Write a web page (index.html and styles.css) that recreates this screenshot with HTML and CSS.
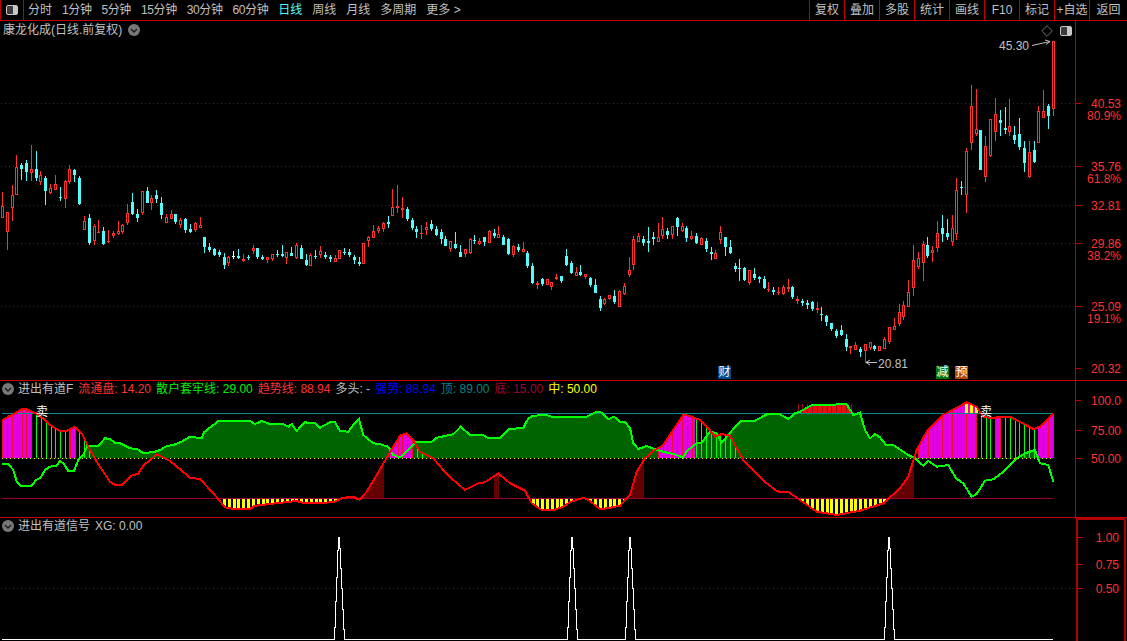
FILE: index.html
```html
<!DOCTYPE html>
<html lang="zh-CN">
<head>
    <meta charset="UTF-8">
    <meta name="viewport" content="width=device-width, initial-scale=1.0">
    <title>康龙化成 日线</title>
    <link rel="stylesheet" href="styles.css">
</head>
<body>
    <div class="toolbar">
        <div class="period-group">
            <div class="panel-btn">
                <svg class="toggle-icon" viewBox="0 0 12 10"><rect x="0.5" y="0.5" width="11" height="9" rx="1.5" class="toggle-frame"/><rect x="7" y="1" width="4" height="8" class="toggle-fill"/></svg>
            </div>
            <span class="period">分时</span>
            <span class="period tight">1分钟</span>
            <span class="period tight">5分钟</span>
            <span class="period tight">15分钟</span>
            <span class="period tight">30分钟</span>
            <span class="period tight">60分钟</span>
            <span class="period active">日线</span>
            <span class="period">周线</span>
            <span class="period">月线</span>
            <span class="period">多周期</span>
            <span class="period">更多 &gt;</span>
        </div>
        <div class="action-group">
            <span class="action">复权</span>
            <span class="action">叠加</span>
            <span class="action">多股</span>
            <span class="action">统计</span>
            <span class="action">画线</span>
            <span class="action">F10</span>
            <span class="action">标记</span>
            <span class="action">+自选</span>
            <span class="action">返回</span>
        </div>
    </div>

    <div class="pane pane-main">
        <div class="chart">
            <svg class="plot" id="mainPlot" viewBox="0 21 1075 359" width="1075" height="359"></svg>
            <div class="pane-title title-main">
                <span>康龙化成(日线.前复权)</span>
                <svg class="fold-icon" viewBox="0 0 12 12"><circle cx="6" cy="6" r="6"/><path d="M3 5l3 3 3-3"/></svg>
            </div>
            <div class="chart-tools">
                <svg class="diamond-icon" viewBox="0 0 12 12"><path d="M6 .7L11.3 6 6 11.3.7 6z"/></svg>
                <svg class="toggle-icon" viewBox="0 0 12 10"><rect x="0.5" y="0.5" width="11" height="9" rx="1.5" class="toggle-frame"/><rect x="7" y="1" width="4" height="8" class="toggle-fill"/></svg>
            </div>
            <span class="note note-high">45.30</span>
            <span class="note note-low">20.81</span>
            <span class="badge badge-cai">财</span>
            <span class="badge badge-jian">减</span>
            <span class="badge badge-yu">预</span>
        </div>
        <div class="axis" id="mainAxis"></div>
    </div>

    <div class="pane pane-trend">
        <div class="chart">
            <svg class="plot" id="trendPlot" viewBox="0 381 1075 136" width="1075" height="136"></svg>
            <div class="pane-title title-trend">
                <svg class="fold-icon" viewBox="0 0 12 12"><circle cx="6" cy="6" r="6"/><path d="M3 5l3 3 3-3"/></svg>
                <span>进出有道F</span>
                <span class="red">流通盘: 14.20</span>
                <span class="green">散户套牢线: 29.00</span>
                <span class="red">趋势线: 88.94</span>
                <span>多头: -</span>
                <span class="blue">强势: 88.94</span>
                <span class="teal">顶: 89.00</span>
                <span class="crimson">底: 15.00</span>
                <span class="yellow">中: 50.00</span>
            </div>
            <span class="sell sell-a">卖</span>
            <span class="sell sell-b">卖</span>
        </div>
        <div class="axis" id="trendAxis"></div>
    </div>

    <div class="pane pane-signal">
        <div class="chart">
            <svg class="plot" id="signalPlot" viewBox="0 518 1076 123" width="1076" height="123"></svg>
            <div class="pane-title title-signal">
                <svg class="fold-icon" viewBox="0 0 12 12"><circle cx="6" cy="6" r="6"/><path d="M3 5l3 3 3-3"/></svg>
                <span>进出有道信号</span>
                <span>XG: 0.00</span>
            </div>
        </div>
        <div class="axis axis-box" id="signalAxis"></div>
    </div>

    <script src="chart.js"></script>
</body>
</html>
```

FILE: styles.css
```css
* {
    margin: 0;
    padding: 0;
    box-sizing: border-box;
}

html, body {
    height: 100%;
    overflow: hidden;
}

body {
    background: #000;
    color: #c0c0c0;
    font-family: "Liberation Sans", "Noto Sans CJK SC", sans-serif;
    font-size: 12px;
    line-height: 14px;
}

.toolbar {
    display: flex;
    justify-content: space-between;
    height: 21px;
    border-bottom: 1px solid #c00000;
}

.period-group {
    display: flex;
    align-items: center;
    gap: 10px;
}

.panel-btn {
    display: flex;
    align-items: center;
    justify-content: center;
    width: 24px;
    height: 20px;
    margin-right: -6px;
    border-left: 1px solid #c00000;
    border-right: 1px solid #c00000;
}

.period.tight {
    letter-spacing: -0.4px;
}

.period.active {
    color: #54fcfc;
}

.action-group {
    display: flex;
}

.action {
    display: flex;
    align-items: center;
    justify-content: center;
    width: 35px;
    height: 20px;
    border-left: 1px solid #c00000;
}

.action:last-child {
    width: 38px;
}

.toggle-icon {
    width: 12px;
    height: 10px;
}

.toggle-frame {
    fill: #3c3c3c;
    stroke: #c8c8c8;
}

.toggle-fill {
    fill: #c8c8c8;
}

.pane {
    display: flex;
    border-bottom: 1px solid #c00000;
}

.pane-main {
    height: 360px;
}

.pane-trend {
    height: 137px;
}

.pane-signal {
    height: 123px;
    border-bottom: none;
}

.chart {
    position: relative;
    flex: 1;
}

.plot {
    position: absolute;
    top: 0;
    left: 0;
    display: block;
}

.pane-title {
    position: relative;
    display: flex;
    align-items: center;
    gap: 5px;
    padding-left: 2px;
}

.title-main {
    height: 18px;
    gap: 6px;
    padding-left: 3px;
}

.title-trend {
    height: 15px;
}

.title-signal {
    height: 16px;
}

.fold-icon {
    flex: none;
    width: 12px;
    height: 12px;
}

.title-trend .fold-icon,
.title-signal .fold-icon {
    margin-right: -1px;
}

.fold-icon circle {
    fill: #787878;
}

.fold-icon path {
    fill: none;
    stroke: #1c1c1c;
    stroke-width: 1.4;
}

.red {
    color: #ff3232;
}

.green {
    color: #00f000;
}

.blue {
    color: #0000ff;
}

.teal {
    color: #008484;
}

.crimson {
    color: #a00038;
}

.yellow {
    color: #ffff00;
}

.chart-tools {
    position: absolute;
    top: 4px;
    right: 3px;
    display: flex;
    align-items: center;
    gap: 7px;
}

.diamond-icon {
    width: 12px;
    height: 12px;
}

.diamond-icon path {
    fill: none;
    stroke: #707070;
}

.note {
    position: absolute;
}

.note-high {
    top: 18px;
    left: 999px;
}

.note-low {
    top: 336px;
    left: 878px;
}

.badge {
    position: absolute;
    top: 345px;
    width: 13px;
    height: 13px;
    color: #fff;
    text-align: center;
    line-height: 13px;
}

.badge-cai {
    left: 718px;
    background: #004a8c;
}

.badge-jian {
    left: 936px;
    background: #007a10;
}

.badge-yu {
    left: 955px;
    background: #b04a10;
}

.sell {
    position: absolute;
    top: 24px;
    color: #fff;
}

.sell-a {
    left: 36px;
}

.sell-b {
    left: 980px;
}

.axis {
    position: relative;
    flex: none;
    width: 52px;
    border-left: 1px solid #c00000;
}

.axis-box {
    width: 50px;
    margin-right: 1px;
    border: 2px solid #b00000;
    border-bottom: none;
}

.tick {
    position: absolute;
    left: 0;
    width: 5px;
    height: 1px;
    background: #c00000;
}

.axis-label {
    position: absolute;
    right: 6px;
    color: #ff3232;
    line-height: 11px;
}

.axis-box .axis-label {
    right: 5px;
}
```

FILE: chart.js
```javascript
const NS = 'http://www.w3.org/2000/svg';

function add(parent, tag, attrs) {
    const el = document.createElementNS(NS, tag);
    for (const k in attrs) el.setAttribute(k, attrs[k]);
    parent.appendChild(el);
    return el;
}

// candles read off the chart: [x, type, high, bodyTop, bodyBottom, low]
// each block is in its own 3x crop space, ox/oy is the crop origin
const candleBlocks = [
    { ox: 0, oy: 130, rows: [
        [7,'r',187,229,263,263],[22,'r',245,247,305,360],[37,'r',166,196,233,273],[49,'r',75,112,194,194],
        [64,'c',100,105,117,150],[79,'c',90,99,125,153],[94,'r',45,118,128,153],[109,'c',63,117,143,153],
        [121,'r',124,136,156,165],[136,'c',138,144,183,225],[151,'r',163,175,189,192],[166,'r',135,163,179,179],
        [181,'c',170,201,203,213],[196,'r',149,153,206,234],[208,'r',106,118,156,162],[223,'c',117,120,135,157],
        [238,'c',138,144,222,225],[253,'r',258,273,299,299],[268,'c',252,264,339,345],[283,'r',282,288,332,345],
        [295,'r',270,305,307,309],[310,'c',291,303,342,345],[325,'r',300,333,335,339],[340,'r',303,309,318,324],
        [355,'r',273,304,312,316],[367,'r',282,285,306,312],[382,'r',222,249,279,285],[397,'c',189,216,252,255],
        [412,'c',237,252,264,276],[427,'r',183,183,249,255],[442,'c',171,183,219,219],[454,'r',195,204,219,240],
        [469,'c',180,195,207,219],[484,'c',201,219,255,267],[499,'r',252,262,278,278],[514,'r',240,252,267,267],
        [526,'c',252,252,276,282],[541,'r',264,270,285,294],[556,'c',264,267,300,309],[571,'c',282,297,306,309],
        [586,'r',276,279,300,306],[601,'r',261,285,294,294],[613,'c',321,321,351,369],[628,'c',339,351,360,366],
        [643,'c',354,357,375,378],[658,'c',360,366,375,381],[673,'c',369,381,405,417],[685,'r',378,381,399,408],
        [700,'w',363,378,381,387],[715,'c',357,378,384,387],[730,'r',372,387,393,396],[745,'c',375,381,384,390],
        [760,'r',345,354,363,372],[772,'c',354,354,381,387],[787,'c',375,381,387,390],[802,'r',381,381,390,399],
        [817,'r',372,372,387,393],[832,'c',360,372,375,381]
    ]},
    { ox: 280, oy: 170, rows: [
        [7,'c',225,252,258,261],[19,'r',246,246,264,282],[34,'c',231,249,258,258],[49,'r',219,225,264,267],
        [64,'c',225,234,267,267],[79,'c',252,270,285,288],[91,'r',249,255,288,288],[106,'c',240,258,261,267],
        [121,'r',228,243,255,264],[136,'c',246,255,261,267],[151,'c',255,261,267,276],[166,'r',255,264,276,276],
        [178,'r',240,240,267,267],[193,'c',234,246,249,255],[208,'c',237,246,255,261],[223,'c',255,261,270,282],
        [238,'c',261,276,282,288],[250,'r',219,219,282,282],[265,'r',198,201,213,231],[280,'r',165,183,204,204],
        [295,'r',168,174,183,189],[310,'r',156,159,177,186],[325,'c',138,156,162,174],[337,'r',57,111,138,138],
        [352,'r',45,108,114,129],[367,'r',81,114,120,144],[382,'c',111,117,147,153],[397,'c',144,150,174,180],
        [409,'c',168,177,186,204],[424,'r',165,189,192,207],[439,'r',156,171,180,195],[454,'c',150,162,177,183],
        [469,'c',168,177,195,198],[484,'c',177,186,207,222],[496,'c',198,207,228,228],[511,'r',213,213,237,246],
        [526,'c',186,222,234,237],[541,'c',225,246,261,261],[556,'r',237,237,252,261],[571,'r',204,207,249,252],
        [583,'c',195,210,213,222],[598,'r',204,213,222,225],[613,'c',201,201,216,228],[628,'r',180,183,219,219],
        [643,'c',177,189,198,204],[655,'r',168,192,204,204],[670,'c',195,201,225,225],[685,'c',204,207,252,255],
        [700,'r',225,228,255,261],[715,'c',222,231,240,246],[730,'r',216,237,246,246],[742,'c',243,249,288,294],
        [757,'c',279,288,339,342],[772,'r',333,339,345,357],[787,'c',324,327,342,348],[802,'r',327,327,345,345],
        [814,'r',336,336,351,360],[829,'r',312,321,327,330]
    ]},
    { ox: 540, oy: 200, rows: [
        [64,'c',228,228,243,249],[79,'c',147,168,195,198],[94,'c',183,189,219,222],[109,'r',201,216,228,228],
        [121,'c',195,216,225,228],[136,'r',222,222,231,237],[151,'c',231,234,255,261],[166,'c',237,255,279,279],
        [181,'c',288,297,324,333],[193,'r',294,297,312,315],[208,'r',285,285,297,300],[223,'c',270,288,306,312],
        [238,'r',270,273,320,320],[253,'r',249,258,282,285],[268,'r',171,210,225,231],[280,'r',108,117,195,210],
        [295,'r',99,108,126,126],[310,'c',108,117,129,138],[325,'c',81,123,129,156],[340,'c',96,111,117,135],
        [355,'r',69,111,126,126],[367,'r',51,87,108,117],[382,'c',84,93,105,117],[397,'r',78,78,105,117],
        [412,'c',51,54,81,108],[427,'r',69,78,93,96],[439,'c',78,84,114,126],[454,'r',93,108,117,120],
        [469,'c',99,108,129,132],[484,'r',111,114,135,135],[499,'c',114,123,147,156],[514,'c',141,156,162,180],
        [526,'r',150,159,177,177],[541,'r',78,96,120,132],[556,'c',111,111,141,168],[571,'c',120,141,159,162],
        [586,'c',189,198,207,216],[598,'c',177,204,207,243],[613,'c',201,204,240,243],[628,'r',210,210,249,255],
        [643,'c',204,222,234,240],[658,'c',228,231,237,249],[673,'c',228,237,264,267],[685,'r',246,267,270,276],
        [700,'c',261,270,276,285],[715,'r',261,276,279,285],[730,'r',255,261,282,285],[745,'r',237,261,267,276],
        [757,'c',258,261,291,297],[772,'r',288,297,303,312],[787,'c',297,303,309,318],[802,'c',300,309,315,327],
        [817,'c',303,306,327,333],[832,'r',306,324,330,339]
    ]},
    { ox: 820, oy: 70, rows: [
        [4,'c',711,732,735,753],[19,'c',735,738,756,768],[34,'c',759,759,777,783],[49,'c',777,783,798,804],
        [64,'c',765,780,795,798],[79,'c',792,807,831,843],[91,'r',828,828,834,852],[106,'r',816,825,840,840],
        [121,'c',831,837,846,861],[136,'r',822,822,843,880],[151,'r',816,816,834,840],[163,'c',825,828,837,843],
        [178,'r',828,828,843,843],[193,'r',801,807,837,837],[208,'r',771,771,816,822],[223,'r',744,768,780,780],
        [238,'r',702,726,762,768],[250,'r',693,705,741,750],[265,'r',630,666,711,711],[280,'r',525,570,654,678],
        [295,'r',546,564,591,597],[310,'r',513,522,579,633],[322,'c',501,525,558,564],[337,'r',528,540,549,576],
        [352,'r',453,489,534,546],[367,'c',435,474,492,516],[382,'c',447,489,501,510],[397,'r',435,474,516,528],
        [409,'r',324,360,492,510],[424,'c',333,351,354,375],[439,'r',234,243,375,429],[454,'r',45,108,219,240],
        [469,'r',57,177,192,198],[481,'c',180,180,300,300],[496,'r',198,228,321,336],[511,'r',147,147,258,261],
        [526,'r',84,132,186,213],[541,'c',120,150,159,198],[556,'c',111,174,180,192],[568,'r',87,168,186,198],
        [583,'c',168,195,210,222],[598,'c',144,192,231,240],[613,'c',213,234,279,306],[628,'r',213,246,321,324],
        [643,'c',213,240,276,279],[655,'r',108,123,219,219],[670,'r',60,123,144,144],[685,'c',102,108,138,177],
        [700,'r',-87,-87,117,138]
    ]}
];

const candleColors = { r: '#ff3232', c: '#54fcfc', w: '#ffffff' };

function drawMain() {
    const svg = document.getElementById('mainPlot');
    [103, 166, 205, 243, 306].forEach(y => {
        add(svg, 'line', { x1: 1, x2: 1075, y1: y + 0.5, y2: y + 0.5, stroke: '#900000', 'stroke-dasharray': '1 3' });
    });

    const g = add(svg, 'g', { 'shape-rendering': 'crispEdges' });
    candleBlocks.forEach(block => {
        block.rows.forEach(row => {
            const x = Math.round(block.ox + row[0] / 3);
            const hi = Math.round(block.oy + row[2] / 3);
            const top = Math.round(block.oy + row[3] / 3);
            const bot = Math.round(block.oy + row[4] / 3);
            const lo = Math.round(block.oy + row[5] / 3);
            drawCandle(g, x, row[1], hi, top, bot, lo);
        });
    });

    // arrows next to the high and low prices
    add(svg, 'path', { d: 'M1032 45.5L1050 41.5M1045 40L1050 41.5L1046 44.5', fill: 'none', stroke: '#c0c0c0' });
    add(svg, 'path', { d: 'M877 362.5H866M870 360L866 362.5L870 365', fill: 'none', stroke: '#c0c0c0' });
}

function drawCandle(g, x, type, hi, top, bot, lo) {
    const color = candleColors[type];
    if (hi < top) add(g, 'rect', { x: x, y: hi, width: 1, height: top - hi, fill: color });
    if (lo > bot) add(g, 'rect', { x: x, y: bot, width: 1, height: lo - bot, fill: color });

    if (bot - top < 3 || type !== 'r') {
        add(g, 'rect', { x: x - 1, y: top, width: 3, height: Math.max(bot - top, 1), fill: color });
    } else {
        add(g, 'rect', { x: x - 0.5, y: top + 0.5, width: 2, height: bot - top - 1, fill: '#000', stroke: color });
    }
}

// indicator curves, same crop coordinates as above
function crop(ox, oy, pts) {
    return pts.map(p => [ox + p[0] / 3, oy + p[1] / 3]);
}

const greenCurve = [].concat(
    crop(0, 375, [[6,268],[25,268],[40,285],[50,320],[62,332],[95,332],[108,315],[122,308],[135,285],[150,275],[170,272],[180,258],[190,265],[205,288],[222,288],[235,255],[250,240],[262,213],[295,212],[315,190],[330,192],[345,203],[360,205],[390,220],[412,222],[430,235],[465,230],[480,225],[500,213],[520,210],[545,200],[570,185],[605,190],[612,172],[640,150],[655,138],[750,138],[765,147],[785,138],[810,147],[850,147],[865,155],[875,147],[890,168],[915,140],[925,145],[945,145],[960,158],[990,142],[1005,142],[1020,168],[1045,170],[1060,150],[1077,133],[1090,180],[1120,205],[1140,208],[1165,215],[1180,240]]),
    crop(400, 375, [[0,247],[15,235],[50,200],[95,200],[110,188],[160,178],[182,155],[210,180],[250,180],[265,190],[300,190],[325,163],[370,158],[385,130],[400,122],[440,120],[455,125],[560,125],[590,110],[605,113],[625,133],[642,125],[660,140],[675,140],[690,160],[700,205],[715,222],[740,213],[770,225],[790,230],[830,240],[850,248],[860,228],[890,205],[905,203],[930,170],[950,175],[965,203],[1010,150],[1025,137],[1065,137],[1100,118]]),
    crop(780, 360, [[0,163],[25,177],[45,160],[60,155],[95,135],[200,133],[220,165],[240,158],[255,210],[270,235],[285,222],[300,232],[318,255],[340,255],[385,285],[405,295],[430,317],[445,303],[470,320],[505,315],[528,355],[550,370],[575,410],[590,402],[615,362],[640,358],[670,335],[710,295],[735,280],[765,270],[780,310],[805,315],[820,365]])
);

const redCurve = [].concat(
    crop(0, 375, [[6,135],[25,125],[40,118],[65,103],[80,103],[108,115],[130,130],[150,150],[180,168],[200,168],[225,155],[245,175],[265,215],[290,260],[330,320],[345,330],[365,330],[395,302],[415,296],[430,272],[470,238],[510,258],[570,308],[600,312],[640,355],[675,397],[700,402],[750,402],[765,392],[890,378],[915,385],[1000,382],[1030,368],[1060,366],[1078,374],[1100,350],[1130,300],[1165,240]]),
    crop(400, 375, [[0,182],[20,175],[40,195],[60,230],[100,250],[135,292],[160,315],[195,345],[235,325],[255,322],[295,295],[330,325],[375,347],[395,385],[425,405],[460,405],[490,395],[510,382],[550,368],[565,375],[600,402],[620,400],[660,392],[690,360],[710,290],[735,250],[760,228],[790,210],[850,120],[870,123],[900,135],[925,160],[945,185],[965,177],[990,182],[1030,255],[1060,285],[1100,325],[1130,348]]),
    crop(780, 360, [[0,396],[25,396],[60,420],[110,455],[170,465],[240,452],[310,430],[360,385],[385,350],[410,270],[440,215],[490,165],[560,127],[590,140],[610,170],[640,175],[660,170],[690,170],[760,207],[780,200],[820,160]])
);

function curveY(curve, x) {
    if (x <= curve[0][0]) return curve[0][1];
    for (let i = 1; i < curve.length; i++) {
        if (x <= curve[i][0]) {
            const a = curve[i - 1], b = curve[i];
            return a[1] + (b[1] - a[1]) * (x - a[0]) / (b[0] - a[0]);
        }
    }
    return curve[curve.length - 1][1];
}

function ptsAttr(curve) {
    return curve.map(p => p[0].toFixed(1) + ',' + p[1].toFixed(1)).join(' ');
}

// area between a curve and a flat base, over x0..x1
function band(svg, curve, x0, x1, base, fill) {
    const pts = [];
    for (let x = x0; x <= x1; x++) pts.push([x, curveY(curve, x)]);
    pts.push([x1, base], [x0, base]);
    add(svg, 'polygon', { points: ptsAttr(pts), fill: fill });
}

const BAR_STEP = 4.82;

function barSlots(x0, x1) {
    const out = [];
    for (let i = 0; i < 220; i++) {
        const x = Math.round(2.3 + BAR_STEP * i);
        if (x >= x0 && x <= x1) out.push(x);
    }
    return out;
}

function drawTrend() {
    const svg = document.getElementById('trendPlot');
    const defs = add(svg, 'defs', {});
    add(add(defs, 'clipPath', { id: 'aboveMid' }), 'rect', { x: 0, y: 381, width: 1075, height: 77.5 });
    add(add(defs, 'clipPath', { id: 'aboveTop' }), 'rect', { x: 795, y: 381, width: 60, height: 32.5 });

    // green area over the mid line
    const closed = greenCurve.concat([[1053, 458], [2, 458]]);
    add(svg, 'polygon', { points: ptsAttr(closed), fill: '#006400', 'clip-path': 'url(#aboveMid)' });
    add(svg, 'polygon', { points: ptsAttr(closed), fill: '#e81010', 'clip-path': 'url(#aboveTop)' });
    barSlots(797, 852).forEach(x => {
        add(svg, 'line', { x1: x + 0.5, x2: x + 0.5, y1: 404, y2: 413, stroke: '#a01010', 'clip-path': 'url(#aboveTop)' });
    });

    // magenta blocks, one red stripe per bar
    [[2, 32], [69, 75], [390, 413], [658, 695], [918, 977], [995, 1001], [1038, 1053]].forEach(r => {
        band(svg, redCurve, r[0], r[1], 458, '#e400e4');
        barSlots(r[0], r[1]).forEach(x => {
            add(svg, 'line', { x1: x + 0.5, x2: x + 0.5, y1: curveY(redCurve, x), y2: 458, stroke: '#e8102c', 'shape-rendering': 'crispEdges' });
        });
    });

    // yellow caps on the magenta hump
    barSlots(962, 977).forEach(x => {
        add(svg, 'rect', { x: x - 1, y: curveY(redCurve, x), width: 3, height: Math.max(413 - curveY(redCurve, x), 0), fill: '#ffff00', 'shape-rendering': 'crispEdges' });
    });

    // thin green bars
    [[36, 65], [78, 90], [415, 425], [696, 742], [978, 992], [1004, 1035]].forEach(r => {
        barSlots(r[0], r[1]).forEach(x => {
            add(svg, 'line', { x1: x + 0.5, x2: x + 0.5, y1: curveY(redCurve, x), y2: 458, stroke: '#00ff00', 'shape-rendering': 'crispEdges' });
        });
    });

    // dark red wedges where the trend line climbs out of the bottom
    [[362, 384], [494, 499], [631, 644], [892, 914]].forEach(r => band(svg, redCurve, r[0], r[1], 498, '#640000'));

    // yellow stripes under the bottom line
    [[220, 340], [532, 627], [800, 890]].forEach(r => {
        barSlots(r[0], r[1]).forEach(x => {
            const y = curveY(redCurve, x);
            if (y > 498) add(svg, 'rect', { x: x - 1, y: 498, width: 3, height: y - 498, fill: '#ffff00', 'shape-rendering': 'crispEdges' });
        });
    });

    add(svg, 'line', { x1: 2, x2: 1053, y1: 413.5, y2: 413.5, stroke: '#008c8c' });
    add(svg, 'line', { x1: 2, x2: 1053, y1: 458.5, y2: 458.5, stroke: '#ffff00', 'stroke-dasharray': '1 3' });
    add(svg, 'line', { x1: 2, x2: 1053, y1: 498.5, y2: 498.5, stroke: '#a00030' });

    add(svg, 'polyline', { points: ptsAttr(greenCurve), fill: 'none', stroke: '#00ff00', 'stroke-width': 2, 'shape-rendering': 'crispEdges' });
    add(svg, 'polyline', { points: ptsAttr(redCurve), fill: 'none', stroke: '#ff0000', 'stroke-width': 2, 'shape-rendering': 'crispEdges' });
}

function drawSignal() {
    const svg = document.getElementById('signalPlot');
    add(svg, 'line', { x1: 1, x2: 1076, y1: 588.5, y2: 588.5, stroke: '#900000', 'stroke-dasharray': '1 3' });

    // stepped outline of one XG pulse, offsets from its centre
    const steps = [[-4,639],[-4,627],[-3,627],[-3,601],[-2,601],[-2,577],[-1,577],[-1,550],[0,550],[0,537],[1,537],[1,548],[2,548],[2,568],[3,568],[3,588],[4,588],[4,609],[5,609],[5,629],[6,629],[6,639]];
    let pts = [[2, 639]];
    [339, 572, 630, 889].forEach(c => {
        steps.forEach(s => pts.push([c + s[0] - 0.5, s[1]]));
    });
    pts.push([1053, 639]);
    add(svg, 'polyline', { points: ptsAttr(pts), fill: 'none', stroke: '#fff', 'shape-rendering': 'crispEdges' });
}

// price scales, y is page position of the tick
const axes = [
    { id: 'mainAxis', paneTop: 21, rows: [
        { y: 103, text: '40.53', tick: 1 }, { y: 115, text: '80.9%' }, { y: 166, text: '35.76', tick: 1 }, { y: 178, text: '61.8%' },
        { y: 205, text: '32.81', tick: 1 }, { y: 243, text: '29.86', tick: 1 }, { y: 255, text: '38.2%' }, { y: 306, text: '25.09', tick: 1 },
        { y: 318, text: '19.1%' }, { y: 368, text: '20.32', tick: 1 }
    ]},
    { id: 'trendAxis', paneTop: 381, rows: [
        { y: 400, text: '100.0', tick: 1 }, { y: 430, text: '75.00', tick: 1 }, { y: 458, text: '50.00', tick: 1 }
    ]},
    { id: 'signalAxis', paneTop: 520, rows: [
        { y: 537, text: '1.00', tick: 1 }, { y: 564, text: '0.75', tick: 1 }, { y: 588, text: '0.50', tick: 1 }
    ]}
];

function drawAxes() {
    axes.forEach(axis => {
        const box = document.getElementById(axis.id);
        axis.rows.forEach(row => {
            if (row.tick) {
                const tick = document.createElement('div');
                tick.className = 'tick';
                tick.style.top = (row.y - axis.paneTop) + 'px';
                box.appendChild(tick);
            }
            const label = document.createElement('span');
            label.className = 'axis-label';
            label.textContent = row.text;
            label.style.top = (row.y - axis.paneTop - 4) + 'px';
            box.appendChild(label);
        });
    });
}

drawMain();
drawTrend();
drawSignal();
drawAxes();
```
